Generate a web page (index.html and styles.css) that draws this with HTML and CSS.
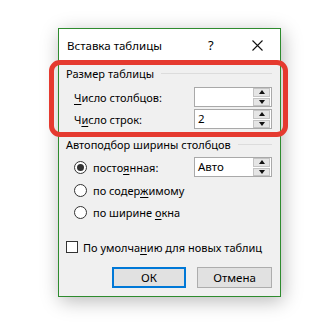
FILE: index.html
```html
<!DOCTYPE html>
<html>
<head>
<meta charset="utf-8">
<link rel="stylesheet" href="styles.css">
</head>
<body>
<div class="dialog">
  <div class="titlebar">
    <span class="title">Вставка таблицы</span>
    <span class="help">?</span>
    <span class="close">
      <svg width="11" height="11" viewBox="0 0 11 11"><path d="M0.5 0.5L10.5 10.5M10.5 0.5L0.5 10.5" stroke="#111" stroke-width="1.1" fill="none"/></svg>
    </span>
  </div>
  <div class="body">
    <div class="legend"><span>Размер таблицы</span><i class="rule"></i></div>
    <div class="row first">
      <span class="label"><u>Ч</u>исло столбцов:</span>
      <div class="spin"><span class="val"></span><div class="btns"><b class="up"></b><b class="down"></b></div></div>
    </div>
    <div class="row second">
      <span class="label">Ч<u>и</u>сло строк:</span>
      <div class="spin"><span class="val">2</span><div class="btns"><b class="up"></b><b class="down"></b></div></div>
    </div>
    <div class="legend g2"><span>Автоподбор ширины столбцов</span><i class="rule"></i></div>
    <div class="row radio-row r1">
      <span class="opt"><span class="radio on"></span><span class="txt">посто<u>я</u>нная:</span></span>
      <div class="spin"><span class="val">Авто</span><div class="btns"><b class="up"></b><b class="down"></b></div></div>
    </div>
    <div class="row radio-row r2">
      <span class="opt"><span class="radio"></span><span class="txt">по содер<u>ж</u>имому</span></span>
    </div>
    <div class="row radio-row r3">
      <span class="opt"><span class="radio"></span><span class="txt">по ширине <u>о</u>кна</span></span>
    </div>
    <div class="check-row"><span class="check"></span><span class="txt">По умолча<u>н</u>ию для новых таблиц</span></div>
    <div class="buttons">
      <button class="btn ok">ОК</button>
      <button class="btn">Отмена</button>
    </div>
  </div>
</div>
<div class="highlight"></div>
</body>
</html>
```
FILE: styles.css
```css
html, body {
  margin: 0;
  padding: 0;
  background: #ffffff;
}
body {
  font-family: "Noto Sans", "Open Sans", sans-serif;
  font-size: 11px;
  color: #000;
  padding: 28px 0 0 58px;
  width: 331px;
  height: 323px;
  box-sizing: border-box;
  overflow: hidden;
}
.txt { white-space: nowrap; }
.dialog {
  width: 223px;
  border: 1px solid #2e8b2e;
  background: #f0f0f0;
  box-shadow: 2px 4px 18px rgba(0, 0, 0, 0.28);
  box-sizing: border-box;
}
.titlebar {
  height: 32px;
  background: #ffffff;
  display: flex;
  align-items: center;
  padding-left: 8px;
}
.title {
  flex: 1;
  font-size: 11.5px;
}
.help {
  width: 12px;
  margin-right: 32px;
  font-size: 13px;
}
.close {
  display: flex;
  margin-right: 17px;
}
.body {
  padding: 6px 8px 8px 7px;
  display: flex;
  flex-direction: column;
}
.legend {
  display: flex;
  align-items: center;
  height: 14px;
  line-height: 14px;
  white-space: nowrap;
}
.legend .rule {
  flex: 1;
  height: 1px;
  background: #dcdcdc;
  margin-left: 7px;
  margin-top: -1px;
}
.row {
  display: flex;
  align-items: center;
  justify-content: space-between;
  height: 20px;
  padding-left: 8px;
  white-space: nowrap;
}
.row.first { margin-top: 6px; }
.row.second { margin-top: 2px; }
.legend.g2 { margin-top: 9px; }
.row.r1 { margin-top: 5px; }
.row.r2 { margin-top: 3px; }
.row.r3 { margin-top: 2px; }
u {
  text-decoration: underline;
  text-underline-offset: 2px;
}
.spin {
  width: 78px;
  height: 20px;
  box-sizing: border-box;
  border: 1px solid #a9a9a9;
  background: #fff;
  display: flex;
  align-items: stretch;
}
.spin .val {
  flex: 1;
  padding-left: 3px;
  line-height: 18px;
  font-size: 11.5px;
}
.btns {
  width: 17px;
  display: flex;
  flex-direction: column;
  gap: 1px;
  padding: 0 1px 0 0;
}
.btns b {
  flex: 1;
  background: #e5e5e5;
  border: 1px solid #c4c4c4;
  position: relative;
}
.btns b::after {
  content: "";
  position: absolute;
  left: 50%;
  top: 50%;
  width: 0;
  height: 0;
  border-left: 3.5px solid transparent;
  border-right: 3.5px solid transparent;
  transform: translate(-50%, -50%);
}
.btns .up::after { border-bottom: 4px solid #111; }
.btns .down::after { border-top: 4px solid #111; }
.opt {
  display: flex;
  align-items: center;
}
.radio {
  width: 13px;
  height: 13px;
  box-sizing: border-box;
  border: 1px solid #333;
  border-radius: 50%;
  background: #fff;
  margin-right: 6px;
  display: flex;
  align-items: center;
  justify-content: center;
}
.radio.on::after {
  content: "";
  width: 7px;
  height: 7px;
  border-radius: 50%;
  background: #333;
}
.check-row {
  display: flex;
  align-items: center;
  height: 14px;
  margin-top: 18px;
}
.check {
  width: 12px;
  height: 12px;
  box-sizing: border-box;
  border: 1px solid #333;
  background: #fff;
  margin-right: 5px;
}
.buttons {
  display: flex;
  justify-content: flex-end;
  gap: 11px;
  margin-top: 13px;
}
.btn {
  font-family: inherit;
  font-size: 11.5px;
  width: 75px;
  height: 21px;
  box-sizing: border-box;
  background: #e1e1e1;
  border: 1px solid #adadad;
  padding: 0;
  color: #000;
}
.btn.ok {
  width: 74px;
  border: 2px solid #0078d7;
}
.highlight {
  position: absolute;
  left: 49px;
  top: 60px;
  width: 239px;
  height: 77px;
  box-sizing: border-box;
  border: 5px solid #e53a2f;
  border-radius: 11px;
}
```
